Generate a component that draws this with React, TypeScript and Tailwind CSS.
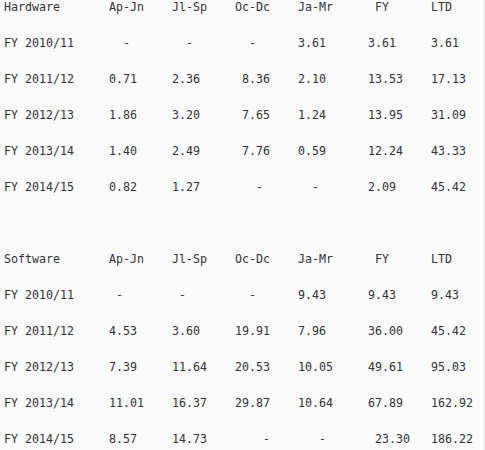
type Cell = [number, string];

const hardware: Cell[][] = [
  [[0, 'Hardware'], [15, 'Ap-Jn'], [24, 'Jl-Sp'], [33, 'Oc-Dc'], [42, 'Ja-Mr'], [53, 'FY'], [61, 'LTD']],
  [[0, 'FY 2010/11'], [17, '-'], [26, '-'], [35, '-'], [42, '3.61'], [52, '3.61'], [61, '3.61']],
  [[0, 'FY 2011/12'], [15, '0.71'], [24, '2.36'], [34, '8.36'], [42, '2.10'], [52, '13.53'], [61, '17.13']],
  [[0, 'FY 2012/13'], [15, '1.86'], [24, '3.20'], [34, '7.65'], [42, '1.24'], [52, '13.95'], [61, '31.09']],
  [[0, 'FY 2013/14'], [15, '1.40'], [24, '2.49'], [34, '7.76'], [42, '0.59'], [52, '12.24'], [61, '43.33']],
  [[0, 'FY 2014/15'], [15, '0.82'], [24, '1.27'], [36, '-'], [44, '-'], [52, '2.09'], [61, '45.42']],
];

const software: Cell[][] = [
  [[0, 'Software'], [15, 'Ap-Jn'], [24, 'Jl-Sp'], [33, 'Oc-Dc'], [42, 'Ja-Mr'], [53, 'FY'], [61, 'LTD']],
  [[0, 'FY 2010/11'], [16, '-'], [25, '-'], [35, '-'], [42, '9.43'], [52, '9.43'], [61, '9.43']],
  [[0, 'FY 2011/12'], [15, '4.53'], [24, '3.60'], [33, '19.91'], [42, '7.96'], [52, '36.00'], [61, '45.42']],
  [[0, 'FY 2012/13'], [15, '7.39'], [24, '11.64'], [33, '20.53'], [42, '10.05'], [52, '49.61'], [61, '95.03']],
  [[0, 'FY 2013/14'], [15, '11.01'], [24, '16.37'], [33, '29.87'], [42, '10.64'], [52, '67.89'], [61, '162.92']],
  [[0, 'FY 2014/15'], [15, '8.57'], [24, '14.73'], [37, '-'], [45, '-'], [53, '23.30'], [61, '186.22']],
];

// pad each cell out to its column, like the original plain-text block
function toLine(cells: Cell[]) {
  let s = '';
  for (const [col, text] of cells) {
    if (s.length < col) s += ' '.repeat(col - s.length);
    s += text;
  }
  return s;
}

function Block({ rows }: { rows: Cell[][] }) {
  return (
    <div>
      {rows.map((r, i) => (
        <div key={i} className="h-9 leading-[14px] whitespace-pre">
          {toLine(r)}
        </div>
      ))}
    </div>
  );
}

export default function App() {
  return (
    <div className="w-[485px] h-[450px] overflow-hidden bg-[#fafafa] border-r border-[#dddddd] pl-1 text-[#333333] text-[11.63px] font-['DejaVu_Sans_Mono',monospace]">
      <Block rows={hardware} />
      <div className="h-9" />
      <Block rows={software} />
    </div>
  );
}
